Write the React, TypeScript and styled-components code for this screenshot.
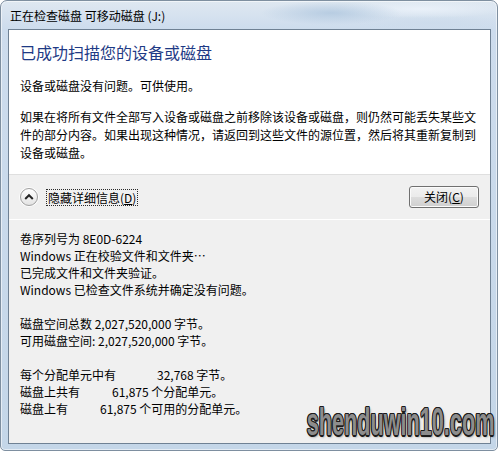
import React from "react";
import styled, { createGlobalStyle } from "styled-components";

const Global = createGlobalStyle`
  html, body { margin: 0; padding: 0; background: #ffffff; }
  body { font-family: "Noto Sans CJK SC", "Microsoft YaHei", sans-serif; }
`;

const Window = styled.div`
  position: relative;
  width: 498px;
  height: 451px;
  box-sizing: border-box;
  display: flex;
  flex-direction: column;
  padding: 0 6px 6px 7px;
  border: 1px solid #7e8fa0;
  border-radius: 7px 7px 5px 5px;
  overflow: hidden;
  background:
    radial-gradient(ellipse 70px 12px at 330px 12px, rgba(170, 195, 220, 0.7), transparent),
    radial-gradient(ellipse 90px 9px at 420px 8px, rgba(235, 242, 250, 0.9), transparent),
    radial-gradient(ellipse 80px 8px at 430px 22px, rgba(205, 220, 236, 0.9), transparent),
    linear-gradient(to bottom, #dfe8f1 0px, #cddced 28px, #c4d6e8 100%);
  box-shadow: inset 0 0 0 1px rgba(255, 255, 255, 0.55);
`;

const TitleBar = styled.div`
  height: 28px;
  display: flex;
  align-items: center;
  padding-left: 2px;
  font-size: 12px;
  color: #000;
  white-space: nowrap;
`;

const Client = styled.div`
  flex: 1;
  display: flex;
  flex-direction: column;
  border: 1px solid #6f8194;
  background: #f0f0f0;
  min-height: 0;
`;

const Content = styled.div`
  height: 145px;
  box-sizing: border-box;
  padding: 11px 12px 0 11px;
  background: #ffffff;
  border-bottom: 1px solid #dfdfdf;
`;

const Heading = styled.div`
  font-size: 16px;
  line-height: 22px;
  color: #1e3a85;
`;

const Text = styled.div<{ $gap: number }>`
  margin-top: ${(p) => p.$gap}px;
  font-size: 12px;
  line-height: 18px;
  color: #000;
  white-space: nowrap;
`;

const ButtonRow = styled.div`
  height: 44px;
  display: flex;
  align-items: center;
  padding: 0 11px;
  font-size: 12px;
`;

const Chevron = styled.div`
  width: 18px;
  height: 18px;
  box-sizing: border-box;
  border-radius: 50%;
  border: 1px solid #a0a0a0;
  background: linear-gradient(to bottom, #ffffff, #e3e3e3);
  box-shadow: 0 0 0 1px rgba(255, 255, 255, 0.8);
  display: flex;
  align-items: center;
  justify-content: center;
`;

const FocusLabel = styled.div`
  margin-left: 8px;
  height: 17px;
  box-sizing: border-box;
  border: 1px dotted #2a2a2a;
  padding: 0 1px;
  line-height: 15px;
  color: #000;
`;

const Key = styled.span`
  text-decoration: underline;
`;

const Spacer = styled.div`
  flex: 1;
`;

const CloseButton = styled.div`
  width: 70px;
  height: 22px;
  box-sizing: border-box;
  border: 1px solid #707070;
  border-radius: 3px;
  background: linear-gradient(to bottom, #f2f2f2 0%, #ebebeb 50%, #dddddd 50%, #cfcfcf 100%);
  box-shadow: inset 0 0 0 1px #fbfbfb;
  display: flex;
  align-items: center;
  justify-content: center;
  color: #000;
  line-height: 20px;
`;

const Details = styled.div`
  flex: 1;
  border-top: 1px solid #ffffff;
  padding: 10px 11px 0 11px;
  font-size: 12px;
  line-height: 17px;
  color: #000;
  white-space: nowrap;
`;

const Line = styled.div`
  height: 17px;
  display: flex;
`;

const Label = styled.span<{ $w: number }>`
  display: inline-block;
  width: ${(p) => p.$w}px;
`;

const Watermark = styled.div`
  position: absolute;
  right: 3px;
  bottom: 9px;
  font-family: "Liberation Sans", Arial, sans-serif;
  font-size: 38px;
  line-height: 38px;
  font-weight: bold;
  color: #8d8d8d;
  transform: scaleX(0.57);
  transform-origin: right bottom;
  white-space: nowrap;
  text-shadow:
    1.5px 0 0 #1c1c1c, -1.5px 0 0 #1c1c1c, 0 1.5px 0 #1c1c1c, 0 -1.5px 0 #1c1c1c,
    1px 1px 0 #1c1c1c, -1px -1px 0 #1c1c1c, 1px -1px 0 #1c1c1c, -1px 1px 0 #1c1c1c,
    2px 2px 3px rgba(0, 0, 0, 0.5);
`;

export default function App() {
  return (
    <>
      <Global />
      <Window>
        <TitleBar>正在检查磁盘 可移动磁盘 (J:)</TitleBar>
        <Client>
          <Content>
            <Heading>已成功扫描您的设备或磁盘</Heading>
            <Text $gap={14}>设备或磁盘没有问题。可供使用。</Text>
            <Text $gap={13}>
              如果在将所有文件全部写入设备或磁盘之前移除该设备或磁盘，则仍然可能丢失某些文
              <br />
              件的部分内容。如果出现这种情况，请返回到这些文件的源位置，然后将其重新复制到
              <br />
              设备或磁盘。
            </Text>
          </Content>
          <ButtonRow>
            <Chevron>
              <svg width="10" height="8" viewBox="0 0 10 8">
                <path d="M1.2 6 L5 2.2 L8.8 6" fill="none" stroke="#262626" strokeWidth="2" />
              </svg>
            </Chevron>
            <FocusLabel>
              隐藏详细信息(<Key>D</Key>)
            </FocusLabel>
            <Spacer />
            <CloseButton>
              关闭(<Key>C</Key>)
            </CloseButton>
          </ButtonRow>
          <Details>
            <Line>卷序列号为 8E0D-6224</Line>
            <Line>Windows 正在校验文件和文件夹…</Line>
            <Line>已完成文件和文件夹验证。</Line>
            <Line>Windows 已检查文件系统并确定没有问题。</Line>
            <Line />
            <Line>磁盘空间总数 2,027,520,000 字节。</Line>
            <Line>可用磁盘空间: 2,027,520,000 字节。</Line>
            <Line />
            <Line>
              <Label $w={137}>每个分配单元中有</Label>32,768 字节。
            </Line>
            <Line>
              <Label $w={92}>磁盘上共有</Label>61,875 个分配单元。
            </Line>
            <Line>
              <Label $w={80}>磁盘上有</Label>61,875 个可用的分配单元。
            </Line>
          </Details>
        </Client>
        <Watermark>shenduwin10.com</Watermark>
      </Window>
    </>
  );
}
